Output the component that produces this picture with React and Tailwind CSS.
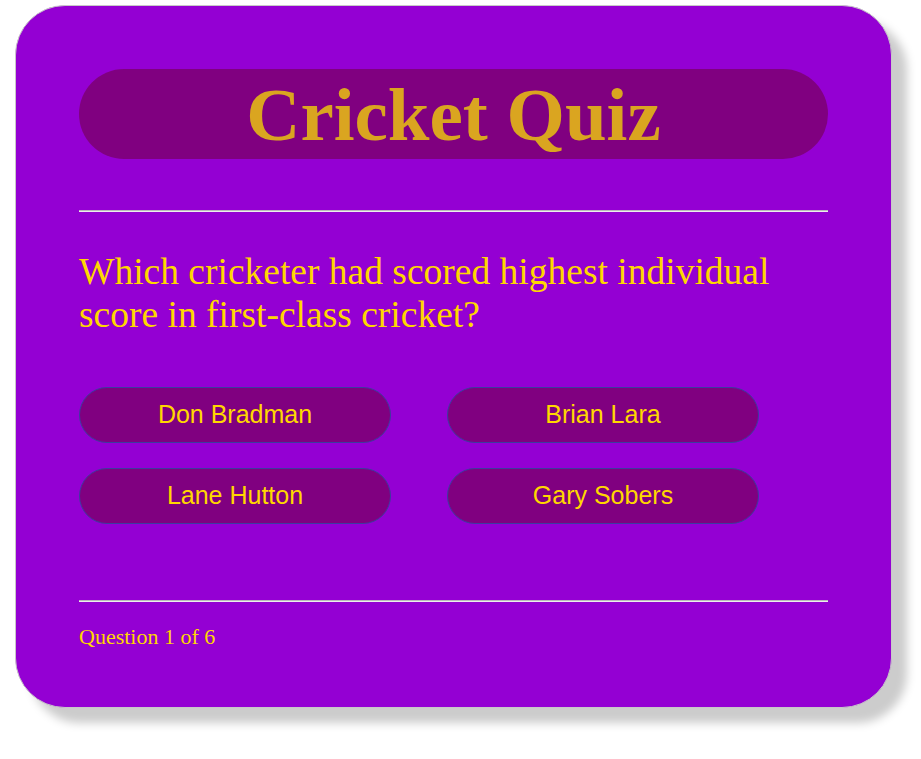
import React from 'react';

const options = ['Don Bradman', 'Brian Lara', 'Lane Hutton', 'Gary Sobers'];

const App = () => {
  return (
    <div className="min-h-[759px] bg-white pt-[5px] pl-[15px]">
      <div className="w-[877px] h-[703px] rounded-[50px] border border-[#c8c8c8] bg-[#9400d3] px-[63px] pt-[63px] shadow-[15px_15px_10px_#cccccc] font-['Liberation_Serif',serif]">
        <div className="h-[90px] rounded-full bg-[#800080] flex items-center justify-center">
          <h1 className="text-[75px] font-bold text-[#daa520] leading-none">Cricket Quiz</h1>
        </div>
        <hr className="mt-[51px] border-0 border-t border-b border-t-[#b9b9b9] border-b-[#eeeeee]" />
        <p className="mt-[38px] text-[37.5px] leading-[43px] text-[#ffd700] pr-[40px]">
          Which cricketer had scored highest individual score in first-class cricket?
        </p>
        <div className="mt-[51px] grid grid-cols-[312px_312px] gap-x-[56px] gap-y-[25px]">
          {options.map((opt) => (
            <button
              key={opt}
              type="button"
              className="h-[56px] rounded-full border border-[#3c3ca0] bg-[#800080] text-[25px] text-[#ffd700] font-['Liberation_Sans',Arial,sans-serif]"
            >
              {opt}
            </button>
          ))}
        </div>
        <hr className="mt-[76px] border-0 border-t border-b border-t-[#b9b9b9] border-b-[#eeeeee]" />
        <p className="mt-[18px] text-[22px] text-[#ffd700]">Question 1 of 6</p>
      </div>
    </div>
  );
};

export default App;
